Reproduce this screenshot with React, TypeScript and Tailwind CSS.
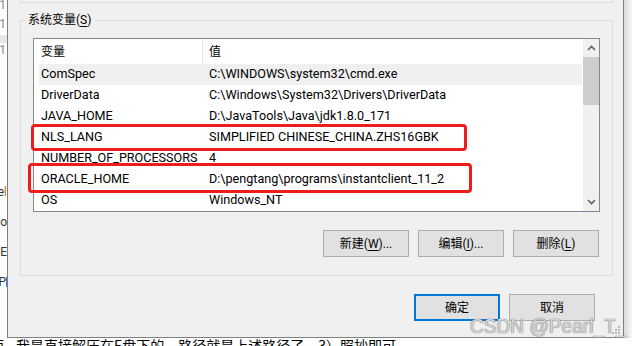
import React from 'react';

// 系统变量一览（左列：变量名，右列：值）
const rows: [string, string][] = [
  ['ComSpec', 'C:\\WINDOWS\\system32\\cmd.exe'],
  ['DriverData', 'C:\\Windows\\System32\\Drivers\\DriverData'],
  ['JAVA_HOME', 'D:\\JavaTools\\Java\\jdk1.8.0_171'],
  ['NLS_LANG', 'SIMPLIFIED CHINESE_CHINA.ZHS16GBK'],
  ['NUMBER_OF_PROCESSORS', '4'],
  ['ORACLE_HOME', 'D:\\pengtang\\programs\\instantclient_11_2'],
  ['OS', 'Windows_NT'],
];

const font = "font-['Roboto','Noto_Sans_CJK_SC',sans-serif]";

const Chevron = ({ up }: { up?: boolean }) => (
  <svg width="9" height="6" viewBox="0 0 9 6">
    <polyline
      points={up ? '1,5 4.5,1.5 8,5' : '1,1 4.5,4.5 8,1'}
      fill="none"
      stroke="#606060"
      strokeWidth="1.6"
    />
  </svg>
);

const WinButton = ({ children, primary }: { children: React.ReactNode; primary?: boolean }) => (
  <div
    className={`w-[86px] h-[27px] flex items-center justify-center bg-[#e1e1e1] text-[12px] text-black ${
      primary ? 'border-2 border-[#0078d7]' : 'border border-[#adadad]'
    }`}
  >
    {children}
  </div>
);

const App: React.FC = () => {
  return (
    <div className={`relative w-[632px] h-[346px] overflow-hidden bg-white flex flex-col ${font}`}>
      <div className="flex h-[338px] shrink-0">
        {/* 背后页面的左侧残留文字 */}
        <div className="w-[7px] overflow-hidden flex flex-col items-end text-[12px] leading-[14px] text-[#333]">
          <div className="mt-[-2px] text-[#888] pr-[1px]">1</div>
          <div className="mt-[5px] text-[#888] pr-[1px]">1</div>
          <div className="mt-[4px] h-[8px] w-[7px] bg-[#e4e8ee]" />
          <div className="text-[#888] pr-[1px]">1</div>
          <div className="mt-[128px] whitespace-nowrap">
            e<span className="text-[#c87a00]">l</span>
          </div>
          <div className="mt-[16px] whitespace-nowrap">Do</div>
          <div className="mt-[16px] whitespace-nowrap">E</div>
          <div className="mt-[16px] whitespace-nowrap flex items-center">
            P<span className="inline-block w-[1px] h-[10px] bg-[#3b7bd4]" />
          </div>
        </div>

        {/* 对话框 */}
        <div className="relative w-[617px] bg-[#f0f0f0] border-l border-r border-b border-[#7f7f7f] flex flex-col">
          <div className="ml-[12px] w-[593px] h-[3px] border-x border-b border-[#dcdcdc]" />

          <div className="relative ml-[12px] mt-[17px] w-[593px] h-[256px] border border-[#dcdcdc] flex flex-col">
            <span className="absolute left-[3px] top-[-9px] px-[4px] bg-[#f0f0f0] text-[12px] leading-[16px] text-black">
              系统变量(<span className="underline underline-offset-2">S</span>)
            </span>

            <div className="mx-[12px] mt-[17px] h-[174px] border border-[#828790] bg-white flex text-[12.6px] text-black">
              <div className="flex-1 flex flex-col">
                <div className="h-[25px] flex items-center shrink-0 text-[12px]">
                  <div className="w-[169px] h-full flex items-center pl-[7px] border-r border-[#e5e5e5]">变量</div>
                  <div className="pl-[6px]">值</div>
                </div>
                {rows.map(([name, value], i) => (
                  <div
                    key={name}
                    className={`h-[21px] flex items-center ml-[5px] mr-[1px] whitespace-nowrap ${
                      i === 0 ? 'bg-[#f0f0f0]' : ''
                    }`}
                  >
                    <div className="w-[164px] pl-[2px]">{name}</div>
                    <div className="pl-[6px]">{value}</div>
                  </div>
                ))}
              </div>
              <div className="w-[16px] bg-[#f0f0f0] flex flex-col">
                <div className="h-[18px] flex items-center justify-center">
                  <Chevron up />
                </div>
                <div className="h-[48px] bg-[#cdcdcd]" />
                <div className="flex-1" />
                <div className="h-[18px] flex items-center justify-center">
                  <Chevron />
                </div>
              </div>
            </div>

            <div className="mt-[18px] pr-[13px] flex justify-end gap-[9px]">
              <WinButton>
                新建(<span className="underline underline-offset-2">W</span>)...
              </WinButton>
              <WinButton>
                编辑(<span className="underline underline-offset-2">I</span>)...
              </WinButton>
              <WinButton>
                删除(<span className="underline underline-offset-2">L</span>)
              </WinButton>
            </div>
          </div>

          <div className="mt-[18px] pr-[28px] flex justify-end gap-[9px]">
            <WinButton primary>确定</WinButton>
            <WinButton>取消</WinButton>
          </div>

          {/* 右下角的尺寸拖柄 */}
          <svg className="absolute right-[2px] bottom-[2px]" width="10" height="10" viewBox="0 0 10 10">
            {[
              [8, 2],
              [5, 5],
              [8, 5],
              [2, 8],
              [5, 8],
              [8, 8],
            ].map(([x, y]) => (
              <rect key={`${x}-${y}`} x={x - 1} y={y - 1} width="2" height="2" fill="#b8b8b8" />
            ))}
          </svg>
        </div>

        <div className="w-[8px] bg-gradient-to-r from-[#d9d9d9] to-[#f7f7f7]" />
      </div>

      {/* 对话框下方的正文 */}
      <div className="flex text-[14px] leading-[14px] text-black whitespace-nowrap font-['Noto_Sans_CJK_SC',sans-serif]">
        <span className="ml-[-10px]">面</span>
        <span className="ml-[12px]">我是直接解压在E盘下的，路径就是上述路径了。3）照抄即可</span>
      </div>

      {/* 截图上的红框标注 */}
      <div className="absolute left-[31px] top-[124px] w-[436px] h-[27px] border-[3px] border-[#ee1d1d] rounded-[4px]" />
      <div className="absolute left-[28px] top-[163px] w-[444px] h-[30px] border-[3px] border-[#ee1d1d] rounded-[4px]" />

      {/* 水印 */}
      <div className="absolute left-[470px] top-[315px] origin-left scale-x-[0.91] text-[21px] leading-[21px] whitespace-nowrap font-['Liberation_Sans',sans-serif] text-[#d4d4d4] [text-shadow:0_0_1px_#7a7a7a,0_0_1px_#7a7a7a]">
        CSDN @Pearl_T_
      </div>
    </div>
  );
};

export default App;
